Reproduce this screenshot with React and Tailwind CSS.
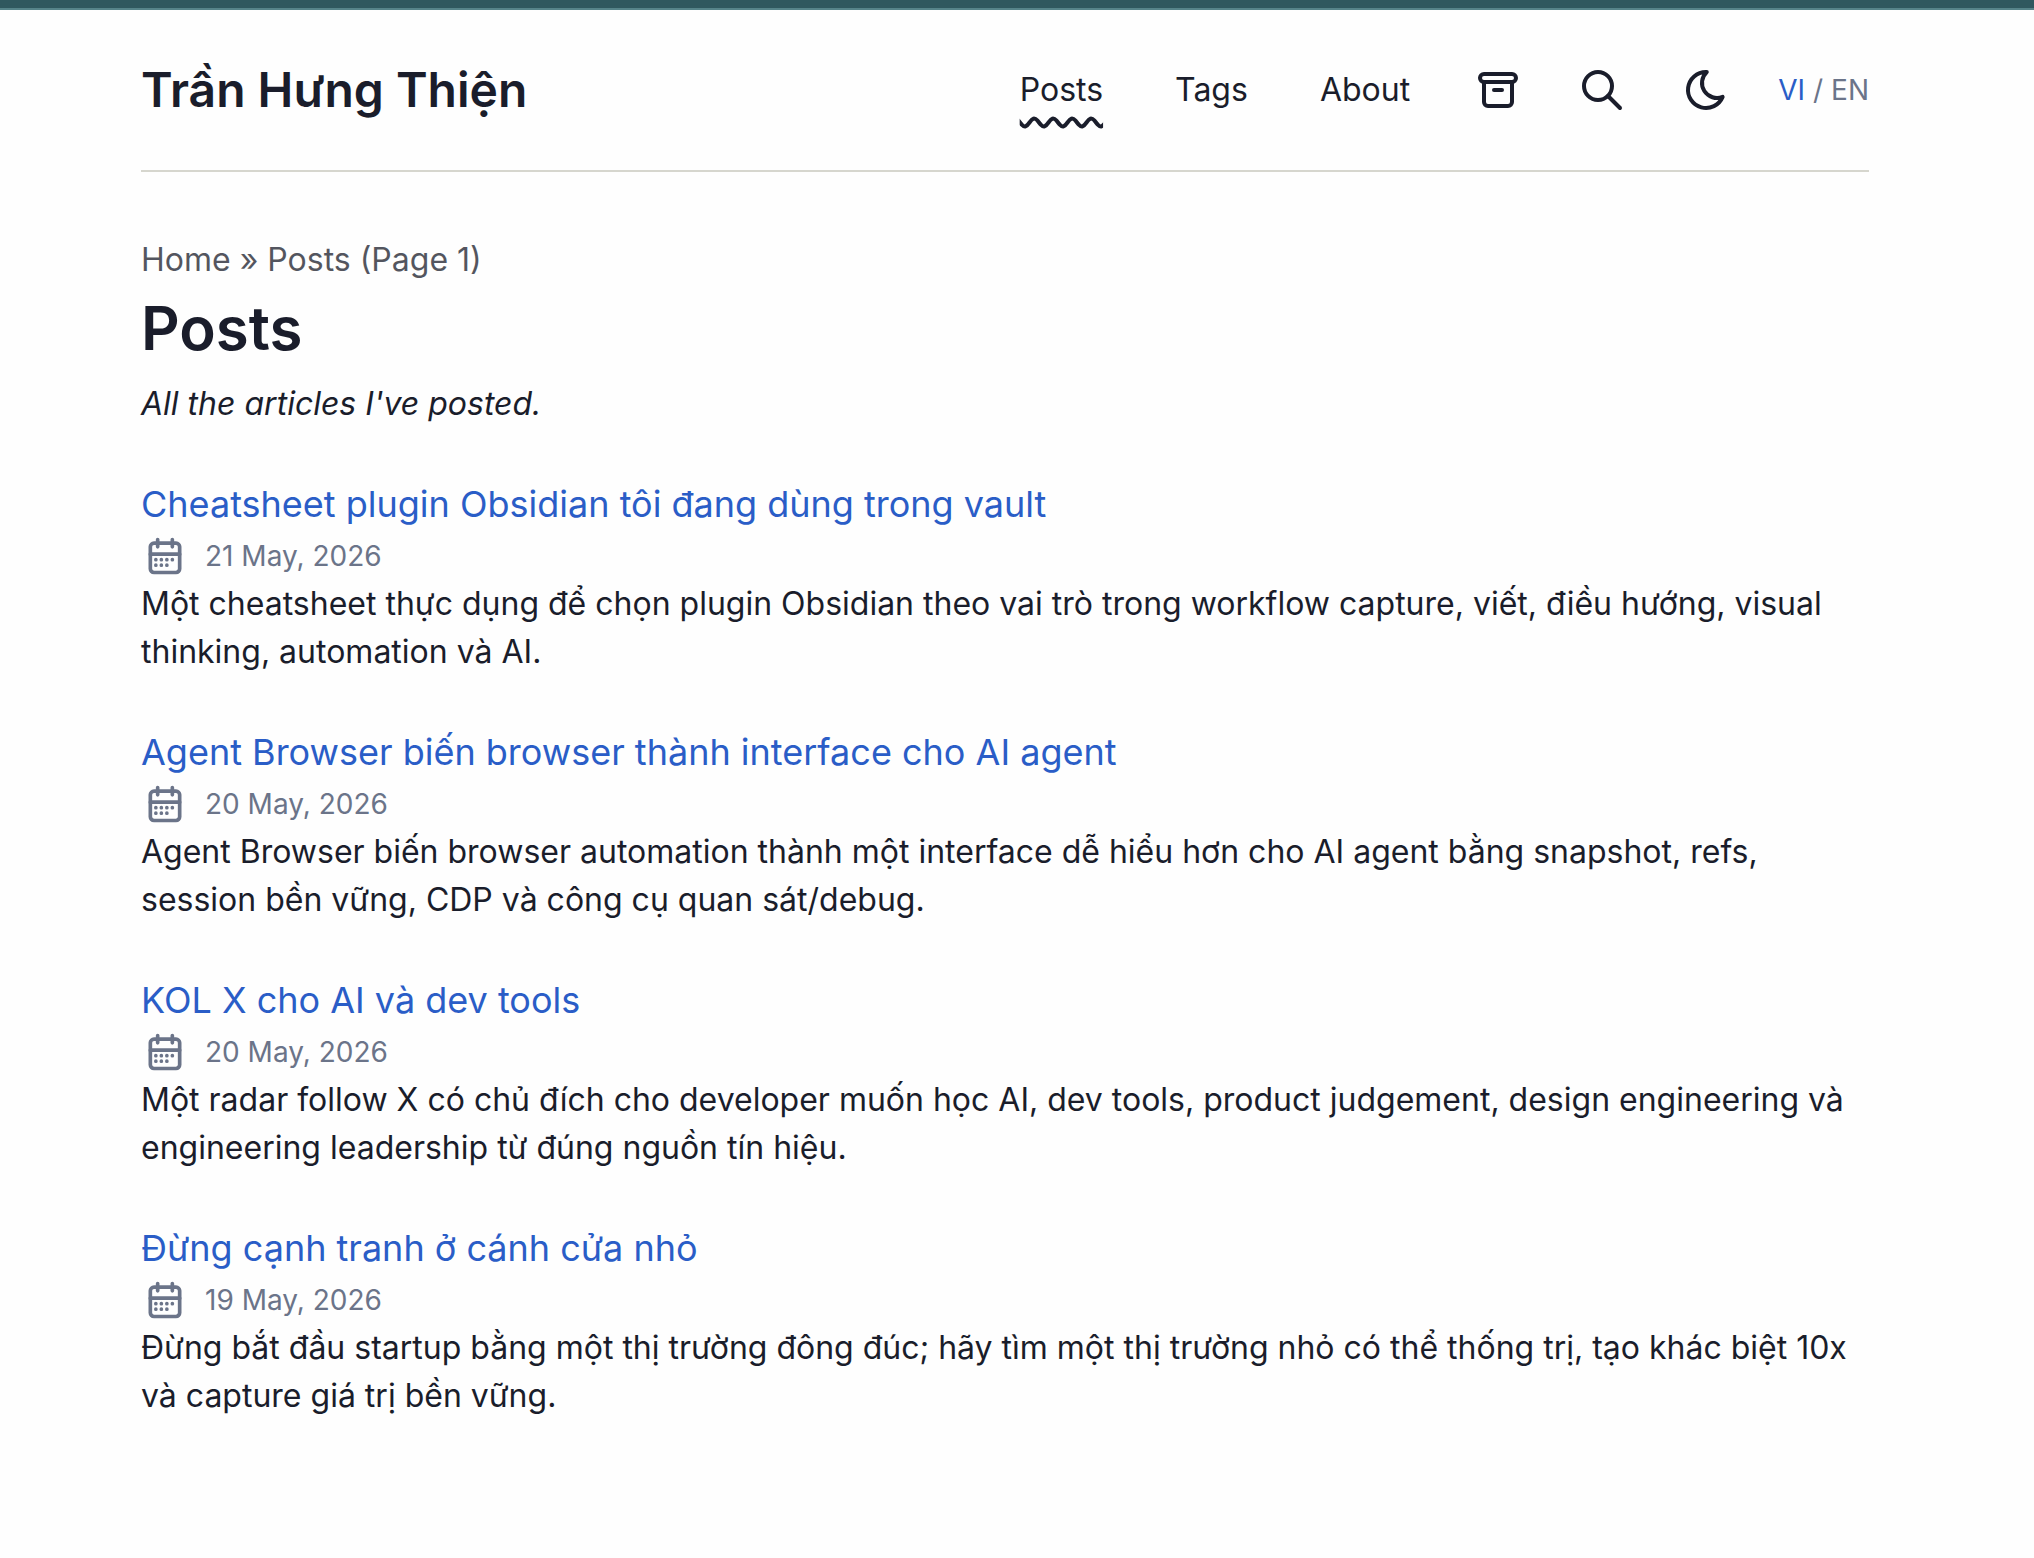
import React from "react";

const navLinks = [
  { label: "Posts", href: "/posts", active: true },
  { label: "Tags", href: "/tags" },
  { label: "About", href: "/about" },
];

const posts = [
  {
    id: 1,
    title: "Cheatsheet plugin Obsidian tôi đang dùng trong vault",
    date: "21 May, 2026",
    dateTime: "2026-05-21",
    description:
      "Một cheatsheet thực dụng để chọn plugin Obsidian theo vai trò trong workflow capture, viết, điều hướng, visual thinking, automation và AI.",
  },
  {
    id: 2,
    title: "Agent Browser biến browser thành interface cho AI agent",
    date: "20 May, 2026",
    dateTime: "2026-05-20",
    description:
      "Agent Browser biến browser automation thành một interface dễ hiểu hơn cho AI agent bằng snapshot, refs, session bền vững, CDP và công cụ quan sát/debug.",
  },
  {
    id: 3,
    title: "KOL X cho AI và dev tools",
    date: "20 May, 2026",
    dateTime: "2026-05-20",
    description:
      "Một radar follow X có chủ đích cho developer muốn học AI, dev tools, product judgement, design engineering và engineering leadership từ đúng nguồn tín hiệu.",
  },
  {
    id: 4,
    title: "Đừng cạnh tranh ở cánh cửa nhỏ",
    date: "19 May, 2026",
    dateTime: "2026-05-19",
    description:
      "Đừng bắt đầu startup bằng một thị trường đông đúc; hãy tìm một thị trường nhỏ có thể thống trị, tạo khác biệt 10x và capture giá trị bền vững.",
  },
];

const Icon = ({ className, children }) => (
  <svg
    viewBox="0 0 24 24"
    fill="none"
    stroke="currentColor"
    strokeWidth="2"
    strokeLinecap="round"
    strokeLinejoin="round"
    aria-hidden="true"
    className={className}
  >
    {children}
  </svg>
);

const ArchiveIcon = () => (
  <Icon className="size-12">
    <path d="M3 6a2 2 0 0 1 2-2h14a2 2 0 0 1 0 4H5a2 2 0 0 1-2-2z" />
    <path d="M5 8v10a2 2 0 0 0 2 2h10a2 2 0 0 0 2-2V8" />
    <path d="M10 12h4" />
  </Icon>
);

const SearchIcon = () => (
  <Icon className="size-12">
    <circle cx="10" cy="10" r="7" />
    <path d="M21 21l-6-6" />
  </Icon>
);

const MoonIcon = () => (
  <Icon className="size-12">
    <path d="M12 3c.132 0 .263 0 .393 0a7.5 7.5 0 0 0 7.92 12.446a9 9 0 1 1-8.313-12.454z" />
  </Icon>
);

const CalendarIcon = () => (
  <Icon className="mx-0.5 size-11 shrink-0">
    <path d="M4 7a2 2 0 0 1 2-2h12a2 2 0 0 1 2 2v12a2 2 0 0 1-2 2H6a2 2 0 0 1-2-2z" />
    <path d="M16 3v4M8 3v4M4 11h16" />
    <path d="M7 14h.013M10.01 14h.005M13.01 14h.005M16.015 14h.005M13.015 17h.005M7.01 17h.005M10.01 17h.005" />
  </Icon>
);

const Header = () => (
  <header className="flex items-center justify-between border-b-2 border-[#d6d6ce] py-12">
    <a href="/" className="text-5xl/16 font-semibold">
      Trần Hưng Thiện
    </a>
    <nav className="flex items-center gap-12">
      <ul className="flex items-center gap-10">
        {navLinks.map((link) => (
          <li key={link.label}>
            <a
              href={link.href}
              className={
                link.active
                  ? "px-4 underline decoration-wavy decoration-4 underline-offset-[16px]"
                  : "px-4"
              }
            >
              {link.label}
            </a>
          </li>
        ))}
      </ul>
      <div className="flex items-center gap-14">
        <a href="/archives" aria-label="Archives">
          <ArchiveIcon />
        </a>
        <a href="/search" aria-label="Search">
          <SearchIcon />
        </a>
        <button type="button" aria-label="Toggle theme">
          <MoonIcon />
        </button>
      </div>
      <div className="flex gap-2 text-[28px]/10 text-[#6b7489]">
        <a href="/vi" className="text-[#2a5dc7]">
          VI
        </a>
        <span>/</span>
        <a href="/en">EN</a>
      </div>
    </nav>
  </header>
);

const PostCard = ({ post }) => (
  <li>
    <a href={`/posts/${post.id}`} className="text-[#2a5dc7]">
      <h2 className="text-4xl/14">{post.title}</h2>
    </a>
    <div className="flex h-12 items-center gap-4 text-[#6b7489]">
      <CalendarIcon />
      <time dateTime={post.dateTime} className="text-[28px]/10">
        {post.date}
      </time>
    </div>
    <p>{post.description}</p>
  </li>
);

const App = () => {
  return (
    <div className="min-h-screen bg-[#fefefe] pr-6 font-['Inter',sans-serif] text-[32px]/12 text-[#1a1d2b]">
      <div className="-mr-6 h-2.5 border-b-2 border-[#57848a] bg-[#30585f]" />
      <div className="mx-auto max-w-448 px-8">
        <Header />
        <main className="pb-24">
          <nav aria-label="breadcrumb" className="mt-16 mb-2 opacity-75">
            <a href="/">Home</a> <span aria-hidden="true">»</span> <span>Posts (Page 1)</span>
          </nav>
          <h1 className="text-6xl/18 font-semibold">Posts</h1>
          <p className="mt-4 mb-12 italic">All the articles I've posted.</p>
          <ul className="space-y-12">
            {posts.map((post) => (
              <PostCard key={post.id} post={post} />
            ))}
          </ul>
        </main>
      </div>
    </div>
  );
};

export default App;
